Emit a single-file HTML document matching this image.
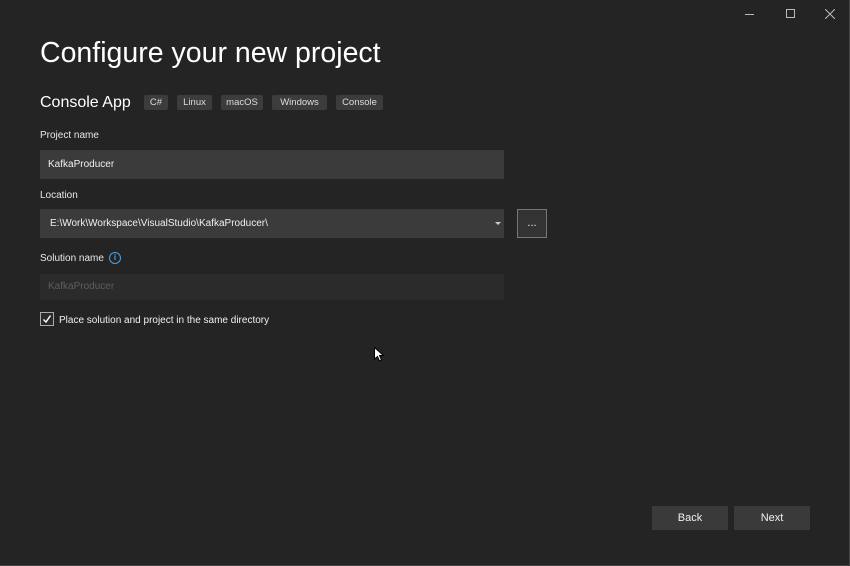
<!DOCTYPE html>
<html><head><style>
body{margin:0;width:850px;height:566px;background:#242424;font-family:"Liberation Sans",sans-serif;color:#f0f0f0;position:relative;overflow:hidden}
.a{position:absolute}
.tag{position:absolute;top:95px;height:15px;background:#3c3c3c;border-radius:2px;font-size:9.5px;color:#ddd;line-height:15px;text-align:center}
.lbl{position:absolute;font-size:10px;color:#e8e8e8;left:40px}
.inp{position:absolute;left:40px;width:464px;background:#3b3b3b;font-size:10px;color:#f0f0f0;box-sizing:border-box;padding-left:8px}
.btn{position:absolute;top:506px;height:24px;width:76px;background:#3a3a3a;font-size:11px;line-height:24px;text-align:center;color:#f0f0f0}
</style></head><body>
<div class="a" style="left:0;top:0;width:849px;height:565px;border-right:1px solid #444;border-bottom:1px solid #444"></div>
<div class="a" style="left:745px;top:14px;width:9px;height:1px;background:#bbb"></div>
<div class="a" style="left:786px;top:9px;width:7px;height:7px;border:1px solid #bbb"></div>
<svg class="a" style="left:825px;top:9px" width="10" height="10"><path d="M0 0L10 10M10 0L0 10" stroke="#bbb" stroke-width="1"/></svg>
<div class="a" style="left:40px;top:37px;font-size:28.5px;color:#fff">Configure your new project</div>
<div class="a" style="left:40px;top:94px;font-size:16px;color:#fff">Console App</div>
<div class="tag" style="left:144px;width:24px">C#</div>
<div class="tag" style="left:177px;width:35px">Linux</div>
<div class="tag" style="left:221px;width:42px">macOS</div>
<div class="tag" style="left:272px;width:55px">Windows</div>
<div class="tag" style="left:336px;width:47px">Console</div>
<div class="lbl" style="top:130px">Project name</div>
<div class="inp" style="top:150px;height:29px;line-height:29px">KafkaProducer</div>
<div class="lbl" style="top:190px">Location</div>
<div class="inp" style="top:209px;height:29px;line-height:29px;padding-left:10px">E:\Work\Workspace\VisualStudio\KafkaProducer\</div>
<div class="a" style="left:495px;top:222px;width:0;height:0;border-left:3px solid transparent;border-right:3px solid transparent;border-top:3px solid #ccc"></div>
<div class="a" style="left:517px;top:209px;width:28px;height:27px;border:1px solid #777;background:#333;font-size:11px;text-align:center;line-height:27px">...</div>
<div class="lbl" style="top:253px">Solution name</div>
<div class="a" style="left:109px;top:252px;width:10px;height:10px;border:1px solid #4fa3e0;border-radius:50%;font-size:8px;line-height:10px;text-align:center;color:#4fa3e0;font-weight:bold">i</div>
<div class="inp" style="top:274px;height:26px;line-height:26px;background:#2b2b2b;color:#5e5e5e">KafkaProducer</div>
<div class="a" style="left:40px;top:312px;width:12px;height:12px;border:1px solid #aaa;background:#2a2a2a"></div>
<svg class="a" style="left:42px;top:314px" width="10" height="10"><path d="M1.5 5.5L4 8L8.5 1.5" stroke="#fff" stroke-width="1.4" fill="none"/></svg>
<div class="a" style="left:59px;top:315px;font-size:10px;color:#f0f0f0">Place solution and project in the same directory</div>
<svg class="a" style="left:374px;top:347px" width="10" height="16"><path d="M0.5 0.5L0.5 12L3.5 9.5L5.5 14L7.5 13L5.5 8.5L9.5 8.5Z" fill="#fff" stroke="#000" stroke-width="1"/></svg>
<div class="btn" style="left:652px">Back</div>
<div class="btn" style="left:734px">Next</div>
</body></html>
